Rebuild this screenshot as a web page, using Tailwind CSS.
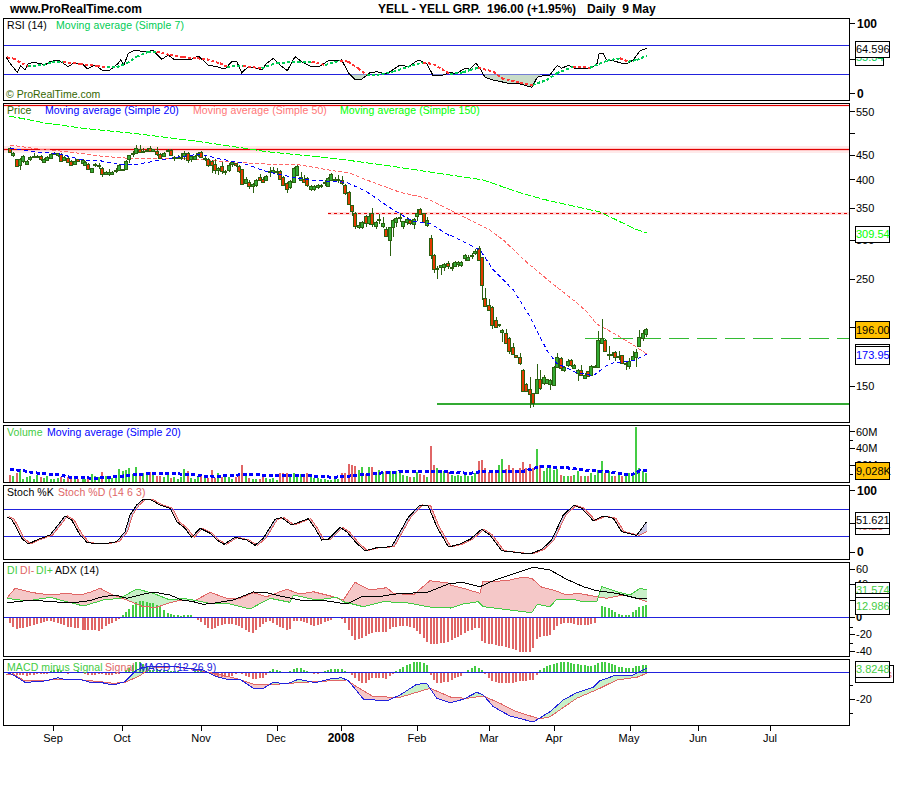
<!DOCTYPE html>
<html lang="en">
<head>
<meta charset="utf-8">
<title>YELL - ProRealTime</title>
<script src="https://cdn.jsdelivr.net/npm/@tailwindcss/browser@4"></script>
</head>
<body class="bg-white">
<div class="w-[900px] h-[800px] overflow-hidden bg-white text-black font-['Liberation_Sans',Arial,sans-serif] text-[11px] leading-[14px]">
  <!-- header -->
  <div class="h-[18px] flex items-center font-bold text-[12px] leading-[16px] whitespace-pre">
    <span class="ml-[10px] w-[368px]">www.ProRealTime.com</span>
    <span class="w-[109px]">YELL - YELL GRP.</span>
    <span class="w-[100px]">196.00 (+1.95%)</span>
    <span>Daily  9 May</span>
  </div>
  <div class="pl-[3px] flex flex-col gap-[2px]">
    <!-- RSI -->
    <div class="flex h-[83px]">
      <div class="relative w-[847px] border border-black">
        <svg id="p1" class="block" width="845" height="81" viewBox="4 19 845 81"></svg>
        <div class="absolute left-[3px] top-[-1px] flex text-[10.5px] tracking-[0.1px] whitespace-pre"><span class="w-[49px]">RSI (14)</span><span class="text-[#00cc55]">Moving average (Simple 7)</span></div>
        <div class="absolute left-[2px] top-[68px] text-[10.5px] text-[#336600]">© ProRealTime.com</div>
      </div>
      <div class="relative w-[50px]">
        <div class="absolute left-0 top-[5px] w-[5px] h-px bg-black"></div>
        <div class="absolute left-0 top-[41px] w-[5px] h-px bg-black"></div>
        <div class="absolute left-0 top-[75px] w-[5px] h-px bg-black"></div>
        <div class="absolute left-[7px] top-[-1px] font-bold text-[12px]">100</div>
        <div class="absolute left-[7px] top-[69px] font-bold text-[12px]">0</div>
        <div class="absolute left-[5px] top-[30px] w-[29px] h-[18px] border border-black bg-white text-[#00cc55] leading-[16px]">55.34</div>
        <div class="absolute left-[5px] top-[23px] w-[35px] h-[17px] border border-black bg-white leading-[15px]">64.596</div>
      </div>
    </div>
    <!-- Price -->
    <div class="flex h-[320px]">
      <div class="relative w-[847px] border border-black">
        <svg id="p2" class="block" width="845" height="318" viewBox="4 104 845 318"></svg>
        <div class="absolute left-[3px] top-[-1px] flex text-[10.5px] tracking-[0.1px] whitespace-pre"><span class="w-[38px] text-[#336600]">Price</span><span class="w-[148px] text-[#0000ff]">Moving average (Simple 20)</span><span class="w-[147px] text-[#ff7777]">Moving average (Simple 50)</span><span class="text-[#00ff00]">Moving average (Simple 150)</span></div>
      </div>
      <div class="relative w-[50px]">
        <div class="absolute left-0 top-[8px] w-[5px] h-px bg-black"></div>
        <div class="absolute left-0 top-[30px] w-[5px] h-px bg-black"></div>
        <div class="absolute left-0 top-[52px] w-[5px] h-px bg-black"></div>
        <div class="absolute left-0 top-[76px] w-[5px] h-px bg-black"></div>
        <div class="absolute left-0 top-[105px] w-[5px] h-px bg-black"></div>
        <div class="absolute left-0 top-[137px] w-[5px] h-px bg-black"></div>
        <div class="absolute left-0 top-[176px] w-[5px] h-px bg-black"></div>
        <div class="absolute left-0 top-[224px] w-[5px] h-px bg-black"></div>
        <div class="absolute left-0 top-[283px] w-[5px] h-px bg-black"></div>
        <div class="absolute left-[6px] top-[2px]">550</div>
        <div class="absolute left-[6px] top-[45px]">450</div>
        <div class="absolute left-[6px] top-[70px]">400</div>
        <div class="absolute left-[6px] top-[98px]">350</div>
        <div class="absolute left-[6px] top-[130px]">300</div>
        <div class="absolute left-[6px] top-[169px]">250</div>
        <div class="absolute left-[6px] top-[276px]">150</div>
        <div class="absolute left-[5px] top-[123px] w-[35px] h-[17px] border border-black bg-white text-[#00ff00] leading-[15px]">309.54</div>
        <div class="absolute left-[5px] top-[218px] w-[35px] h-[18px] border border-black bg-[#ffc000] leading-[16px]">196.00</div>
        <div class="absolute left-[5px] top-[241px] w-[35px] h-[17px] border border-black bg-white"></div>
        <div class="absolute left-[5px] top-[243px] w-[35px] h-[19px] border border-black bg-white text-[#0000ff] leading-[17px]">173.95</div>
      </div>
    </div>
    <!-- Volume -->
    <div class="flex h-[58px]">
      <div class="relative w-[847px] border border-black">
        <svg id="p3" class="block" width="845" height="56" viewBox="4 426 845 56"></svg>
        <div class="absolute left-[3px] top-[-1px] flex text-[10.5px] tracking-[0.1px] whitespace-pre"><span class="w-[40px] text-[#44cc44]">Volume</span><span class="text-[#0000ff]">Moving average (Simple 20)</span></div>
      </div>
      <div class="relative w-[50px]">
        <div class="absolute left-0 top-[6px] w-[5px] h-px bg-black"></div>
        <div class="absolute left-0 top-[15px] w-[3px] h-px bg-black"></div>
        <div class="absolute left-0 top-[23px] w-[5px] h-px bg-black"></div>
        <div class="absolute left-0 top-[40px] w-[5px] h-px bg-black"></div>
        <div class="absolute left-0 top-[49px] w-[3px] h-px bg-black"></div>
        <div class="absolute left-[6px] top-0">60M</div>
        <div class="absolute left-[6px] top-[16px]">40M</div>
        <div class="absolute left-[6px] top-[33px]">20M</div>
        <div class="absolute left-[5px] top-[37px] w-[35px] h-[18px] border border-black bg-[#ffc000] leading-[16px]">9,028K</div>
      </div>
    </div>
    <!-- Stoch -->
    <div class="flex h-[75px]">
      <div class="relative w-[847px] border border-black">
        <svg id="p4" class="block" width="845" height="73" viewBox="4 486 845 73"></svg>
        <div class="absolute left-[3px] top-[-1px] flex text-[10.5px] tracking-[0.1px] whitespace-pre"><span class="w-[51px]">Stoch %K</span><span class="text-[#e06666]">Stoch %D (14 6 3)</span></div>
      </div>
      <div class="relative w-[50px]">
        <div class="absolute left-0 top-[5px] w-[5px] h-px bg-black"></div>
        <div class="absolute left-0 top-[38px] w-[5px] h-px bg-black"></div>
        <div class="absolute left-0 top-[67px] w-[5px] h-px bg-black"></div>
        <div class="absolute left-[7px] top-[-1px] font-bold text-[12px]">100</div>
        <div class="absolute left-[7px] top-[60px] font-bold text-[12px]">0</div>
        <div class="absolute left-[5px] top-[33px] w-[35px] h-[17px] border border-black bg-white text-[#e06666] leading-[15px]">49.23</div>
        <div class="absolute left-[5px] top-[27px] w-[35px] h-[17px] border border-black bg-white leading-[15px]">51.621</div>
      </div>
    </div>
    <!-- ADX -->
    <div class="flex h-[95px]">
      <div class="relative w-[847px] border border-black">
        <svg id="p5" class="block" width="845" height="93" viewBox="4 563 845 93"></svg>
        <div class="absolute left-[3px] top-0 flex text-[10.5px] tracking-[0.1px] whitespace-pre"><span class="w-[13px] text-[#44cc44]">DI</span><span class="w-[16px] text-[#e06666]">DI-</span><span class="w-[19px] text-[#44cc44]">DI+</span><span>ADX (14)</span></div>
      </div>
      <div class="relative w-[50px]">
        <div class="absolute left-0 top-[7px] w-[5px] h-px bg-black"></div>
        <div class="absolute left-0 top-[22px] w-[5px] h-px bg-black"></div>
        <div class="absolute left-0 top-[38px] w-[5px] h-px bg-black"></div>
        <div class="absolute left-0 top-[55px] w-[5px] h-px bg-black"></div>
        <div class="absolute left-0 top-[65px] w-[3px] h-px bg-black"></div>
        <div class="absolute left-0 top-[72px] w-[5px] h-px bg-black"></div>
        <div class="absolute left-0 top-[81px] w-[3px] h-px bg-black"></div>
        <div class="absolute left-0 top-[89px] w-[5px] h-px bg-black"></div>
        <div class="absolute left-[6px] top-0">60</div>
        <div class="absolute left-[6px] top-[15px]">40</div>
        <div class="absolute left-[6px] top-[48px] font-bold">0</div>
        <div class="absolute left-[6px] top-[65px]">-20</div>
        <div class="absolute left-[6px] top-[82px]">-40</div>
        <div class="absolute left-[5px] top-[20px] w-[35px] h-[17px] border border-black bg-white text-[#44cc44] leading-[15px]">31.574</div>
        <div class="absolute left-[5px] top-[31px] w-[35px] h-[17px] border border-black bg-white"></div>
        <div class="absolute left-[5px] top-[35px] w-[35px] h-[18px] border border-black bg-white text-[#44cc44] leading-[16px]">12.986</div>
      </div>
    </div>
    <!-- MACD -->
    <div class="flex h-[67px]">
      <div class="relative w-[847px] border border-black">
        <svg id="p6" class="block" width="845" height="65" viewBox="4 660 845 65"></svg>
        <div class="absolute left-[3px] top-0 flex text-[10.5px] tracking-[0.1px] whitespace-pre"><span class="w-[98px] text-[#44cc44]">MACD minus Signal</span><span class="w-[34px] text-[#e06666]">Signal</span><span class="text-[#2222dd]">MACD (12 26 9)</span></div>
      </div>
      <div class="relative w-[50px]">
        <div class="absolute left-0 top-[26px] w-[3px] h-px bg-black"></div>
        <div class="absolute left-0 top-[40px] w-[5px] h-px bg-black"></div>
        <div class="absolute left-0 top-[54px] w-[3px] h-px bg-black"></div>
        <div class="absolute left-[6px] top-[33px]">-20</div>
        <div class="absolute left-[5px] top-[6px] w-[39px] h-[18px] border border-black bg-white text-[#e06666] text-right pr-[1px] leading-[16px]">s</div>
        <div class="absolute left-[5px] top-[2px] w-[35px] h-[17px] border border-black bg-white text-[#44cc44] leading-[15px]">3.8248</div>
      </div>
    </div>
  </div>
  <!-- date axis -->
  <div class="relative h-[24px] ml-[3px] w-[847px]">
    <div class="absolute left-[50px] top-0 w-px h-[5px] bg-black"></div>
    <div class="absolute left-[119px] top-0 w-px h-[5px] bg-black"></div>
    <div class="absolute left-[198px] top-0 w-px h-[5px] bg-black"></div>
    <div class="absolute left-[274px] top-0 w-px h-[5px] bg-black"></div>
    <div class="absolute left-[338px] top-0 w-px h-[5px] bg-black"></div>
    <div class="absolute left-[414px] top-0 w-px h-[5px] bg-black"></div>
    <div class="absolute left-[486px] top-0 w-px h-[5px] bg-black"></div>
    <div class="absolute left-[551px] top-0 w-px h-[5px] bg-black"></div>
    <div class="absolute left-[627px] top-0 w-px h-[5px] bg-black"></div>
    <div class="absolute left-[695px] top-0 w-px h-[5px] bg-black"></div>
    <div class="absolute left-[767px] top-0 w-px h-[5px] bg-black"></div>
    <div class="absolute left-[50px] top-[5px] -translate-x-1/2">Sep</div>
    <div class="absolute left-[119px] top-[5px] -translate-x-1/2">Oct</div>
    <div class="absolute left-[198px] top-[5px] -translate-x-1/2">Nov</div>
    <div class="absolute left-[273px] top-[5px] -translate-x-1/2">Dec</div>
    <div class="absolute left-[338px] top-[5px] -translate-x-1/2 font-bold text-[12px]">2008</div>
    <div class="absolute left-[414px] top-[5px] -translate-x-1/2">Feb</div>
    <div class="absolute left-[486px] top-[5px] -translate-x-1/2">Mar</div>
    <div class="absolute left-[551px] top-[5px] -translate-x-1/2">Apr</div>
    <div class="absolute left-[626px] top-[5px] -translate-x-1/2">May</div>
    <div class="absolute left-[695px] top-[5px] -translate-x-1/2">Jun</div>
    <div class="absolute left-[767px] top-[5px] -translate-x-1/2">Jul</div>
  </div>
</div>
<script>
const Z=(f,dx,dy)=>{const o=[];for(let i=0;i<f.length;i+=2)o.push([dx+f[i]/3,dy+f[i+1]/3]);return o};
const J=(...a)=>[].concat(...a);
const at=(p,x)=>{if(x<=p[0][0])return p[0][1];for(let i=1;i<p.length;i++)if(x<=p[i][0]){const a=p[i-1],b=p[i];return a[1]+(b[1]-a[1])*(x-a[0])/((b[0]-a[0])||1)}return p[p.length-1][1]};
const S=s=>s.map(p=>p[0].toFixed(1)+','+p[1].toFixed(1)).join(' ');
const line=(p,c,w=1,d='')=>`<polyline points="${S(p)}" fill="none" stroke="${c}" stroke-width="${w}" ${d?`stroke-dasharray="${d}"`:''} shape-rendering="crispEdges"/>`;
const hl=(y,x1,x2,c,w=1,d='')=>`<line x1="${x1}" x2="${x2}" y1="${y}" y2="${y}" stroke="${c}" stroke-width="${w}" ${d?`stroke-dasharray="${d}"`:''} shape-rendering="crispEdges"/>`;
const fillB=(a,b,x1,x2,cA,cB)=>{let pa='',pb='';for(let x=Math.ceil(x1);x<x2;x++){const m=x+.5,ya=at(a,m),yb=at(b,m);if(Math.abs(ya-yb)<.3)continue;const seg=`M${m} ${ya.toFixed(1)}V${yb.toFixed(1)}`;if(ya<yb)pa+=seg;else pb+=seg}return `<path d="${pa}" stroke="${cA}" fill="none"/><path d="${pb}" stroke="${cB}" fill="none"/>`};
const R=(x,y,w,h,c,s='')=>`<rect x="${x}" y="${y}" width="${w}" height="${h}" fill="${c}" ${s?`stroke="${s}"`:''} shape-rendering="crispEdges"/>`;

/* candles: zoomx, bodyTop, bodyBottom, wickTop, wickBottom, red */
const c3=[[31,55,67,52,70,1],[40,70,76,66,82,0],[52,88,110,88,112,1],[60,88,105,85,120,0],[70,78,94,76,98,0],[82,93,101,90,103,0],[91,82,88,78,93,0],[103,78,82,70,84,0],[112,78,82,75,84,0],[124,78,88,74,92,1],[133,88,96,85,98,0],[142,82,90,78,92,0],[154,72,84,70,86,0],[163,70,74,65,76,0],[175,70,76,68,82,0],[184,72,92,70,94,1],[192,82,92,78,94,0],[205,85,97,80,99,1],[214,94,105,90,108,1],[226,92,101,88,103,0],[235,88,94,86,97,1],[248,90,100,88,103,0],[256,96,105,92,108,0],[265,103,118,100,120,1],[277,115,126,113,128,0],[286,103,106,98,112,0],[298,104,107,98,116,0],[307,114,131,112,140,1],[319,126,132,122,136,0],[328,126,132,117,138,0],[337,126,132,124,136,0],[349,119,121,115,130,0],[358,105,120,102,122,0],[368,117,120,116,122,0],[379,93,118,90,120,0],[388,76,88,74,98,0],[400,70,74,64,80,0],[409,55,70,45,72,0],[421,58,66,45,68,1],[430,62,66,55,68,0],[442,59,62,55,66,0],[451,55,64,48,66,1],[460,58,64,56,66,0],[472,64,74,52,78,1],[481,72,84,70,86,1],[493,68,76,66,80,0],[503,61,64,58,66,0],[514,60,76,58,78,1],[523,81,84,78,92,0],[535,81,84,76,88,0],[544,80,84,70,90,0],[553,70,78,62,90,0],[565,68,88,66,100,1],[574,78,88,74,96,0],[586,78,86,76,88,0],[595,68,74,66,80,0],[604,65,80,62,84,1],[616,83,86,78,92,0],[625,88,106,84,110,1],[637,94,106,90,130,1],[646,102,120,88,132,1],[655,115,120,110,134,0],[667,108,124,96,132,1],[676,124,127,120,134,0],[688,104,120,100,126,0],[697,97,103,92,112,0],[709,100,106,98,110,1],[718,108,124,104,128,1],[727,118,162,116,164,1],[739,146,158,140,162,0],[748,156,168,150,176,1],[760,162,168,158,190,0],[769,150,166,148,170,0],[781,140,148,132,152,1],[790,148,156,140,160,1],[799,138,150,136,152,0],[811,122,126,112,140,0],[820,120,126,110,130,0],[832,123,126,115,135,0],[841,124,148,120,150,1],[850,140,164,138,168,1],[862,160,178,156,188,1],[871,152,170,150,176,0],[883,115,158,112,160,0],[892,107,134,104,136,0],[904,140,148,126,152,0],[913,146,154,136,158,1],[922,145,166,142,170,1],[934,168,176,165,182,0],[943,168,176,166,184,0],[955,165,172,162,176,0],[964,165,168,162,174,0],[976,155,158,150,168,0],[985,145,170,142,172,0],[994,132,150,130,152,0],[1006,148,151,140,156,0],[1015,148,151,136,158,0],[1027,150,160,138,164,1],[1036,165,190,163,194,1],[1048,185,222,183,226,1],[1057,226,245,224,258,1],[1066,248,286,246,298,1],[1078,286,292,276,296,0],[1087,276,290,272,298,0],[1099,258,280,256,290,1],[1108,258,280,250,286,0],[1117,250,284,235,290,1],[1129,276,288,272,296,0],[1138,267,270,252,282,0],[1150,280,288,262,294,0],[1159,296,318,292,322,1],[1171,292,332,290,378,0],[1180,270,292,268,320,0],[1189,265,278,262,292,0],[1201,261,264,250,276,0],[1210,274,290,272,296,0],[1222,268,278,262,286,0],[1231,270,280,266,284,1],[1243,266,280,264,296,0],[1252,248,258,238,272,0],[1261,238,252,234,256,1],[1273,250,276,248,280,1],[1282,270,286,262,290,0],[1294,324,374,315,388,1],[1303,374,416,372,430,1],[1312,415,418,408,446,0],[1324,406,412,404,434,0],[1333,402,412,398,422,0],[1345,400,410,392,416,1]];
const c4=[[5,111,114,100,122,0],[16,95,108,92,112,0],[25,97,103,94,110,0],[34,95,104,92,112,0],[46,76,86,72,92,0],[55,80,90,76,94,0],[67,76,80,70,88,0],[76,62,68,58,76,0],[88,55,92,48,94,1],[97,82,166,80,210,1],[106,205,230,175,232,1],[118,224,238,208,240,1],[127,230,284,228,296,1],[139,270,290,262,294,1],[148,283,286,282,292,0],[157,300,306,296,335,0],[169,308,338,296,340,1],[178,324,364,322,372,1],[190,352,372,338,374,1],[199,376,382,375,384,1],[211,382,400,368,404,1],[220,420,482,418,484,1],[229,462,484,460,486,1],[241,478,494,440,535,1],[250,490,520,488,530,1],[262,448,490,402,492,0],[271,448,474,420,480,1],[283,442,460,436,466,0],[292,448,460,446,462,0],[301,450,462,448,480,0],[313,410,464,408,466,0],[322,380,410,368,412,0],[334,384,415,380,422,1],[343,410,420,408,426,0],[355,392,404,388,410,0],[364,390,406,388,412,1],[373,405,414,402,416,0],[385,420,430,418,452,0],[394,420,434,405,438,1],[406,434,444,428,448,0],[415,424,438,422,442,1],[424,408,434,406,436,0],[436,407,410,404,412,0],[445,330,410,302,412,0],[457,325,340,267,342,0],[466,330,364,328,366,1],[478,371,374,348,390,0],[487,371,374,366,378,0],[496,366,380,364,392,1],[508,377,380,364,390,0],[517,376,400,374,402,1],[529,399,402,396,420,0],[538,394,408,384,418,0],[550,378,390,362,392,0],[559,366,382,358,412,0],[568,322,350,300,352,0],[580,310,326,300,334,0],[589,296,312,294,320,0]];
const bars=J(c3.map(b=>({x:b[0]/3,t:130+b[1]/3,b:130+b[2]/3,wt:130+b[3]/3,wb:130+b[4]/3,r:b[5]})),c4.map(b=>({x:450+b[0]/3,t:230+b[1]/3,b:230+b[2]/3,wt:230+b[3]/3,wb:230+b[4]/3,r:b[5]})));

/* RSI */
const rsi=J(Z([18,170,30,190,42,205,52,218,62,198,75,210,85,190,100,188,120,190,135,195,150,185,175,180,190,190,205,200,220,190,245,190,262,207,285,195,305,210,330,210,355,190,362,180,372,195,385,160,405,150,430,155,460,152,485,178,505,165,525,180,550,178,575,178,595,168,625,195,650,200,675,207,695,185,710,185,725,218,745,200,770,205,785,210,800,190,820,175,840,195,862,212,885,170,905,185,935,200,960,198,985,182,1025,180,1045,218,1065,238,1085,238,1110,218,1130,215,1160,222,1200,195,1225,200,1255,180,1280,190,1300,228,1330,225,1350,218],0,0),Z([20,220,45,205,60,208,78,190,90,205,105,232,130,240,175,250,210,252,245,262,262,232,285,225,300,225,322,196,335,205,355,196,375,205,415,205,440,195,447,162,460,160,470,180,490,182,515,190,530,192,550,180,570,152,590,145],450,0));
const rsiM=J(Z([20,172,40,175,65,190,85,198,130,195,155,187,190,186,240,192,290,198,320,202,350,202,380,190,410,170,445,155,470,155,510,165,550,172,590,175,620,178,660,190,680,200,730,198,785,205,830,188,895,187,935,185,975,195,1020,182,1045,185,1075,205,1100,225,1130,225,1180,215,1250,192,1270,188,1300,192,1350,222],0,0),Z([40,217,60,210,85,203,130,215,155,235,210,248,248,255,290,240,320,220,370,200,420,203,470,182,510,175,535,185,560,180,590,167],450,0));
let h=hl(45.5,4,849,'#2222dd')+hl(74.5,4,849,'#2222dd');
{let p='';for(let x=340;x<540;x++){const y=at(rsi,x+.5);if(y>74.5)p+=`M${x+.5} 74.5V${y.toFixed(1)}`}h+=`<path d="${p}" stroke="#c8dcc8" fill="none"/>`}
h+=line(rsi,'#000');
for(let i=1;i<rsiM.length;i++){h+=line([rsiM[i-1],rsiM[i]],rsiM[i][1]>rsiM[i-1][1]+.2?'#ff3333':'#00cc55',2,'3 2')}
document.getElementById('p1').innerHTML=h;

/* Price */
const ma150=J(Z([28,348,130,368,250,385,400,400,600,425,735,445,800,455,1000,475,1150,495,1350,525],0,0),Z([100,540,200,575,280,598],450,0),[[600,212],[635,229],[647,233]]);
const ma50=J(Z([30,45,100,55,200,65,300,78,400,86,520,86,600,88,700,97,800,102,900,105,1000,122,1050,130,1100,150,1200,187,1280,205,1350,240],0,130),Z([120,0,160,30,230,97,300,155,370,210,410,245,440,282,500,315,550,345,590,372],450,230));
const ma20=J(Z([30,55,100,65,170,70,250,90,300,92,350,102,400,105,470,92,520,83,600,72,650,85,730,100,800,125,880,142,930,150,1040,157,1100,185,1180,240,1240,275,1290,280,1350,318],0,130),Z([0,15,70,50,90,60,130,120,190,180,240,260,290,360,320,400,380,428,430,437,480,400,550,392,590,372],450,230));
h='';
h+=R(4,104,845,3,'#ffe4e4')+R(4,146,845,7,'#ffeaea')+R(4,148,845,3,'#ffc8c8')+R(328,212,521,3,'#ffdcdc');
h+=hl(105.5,4,849,'#e00000')+hl(149.5,4,849,'#e00000')+hl(213.5,328,849,'#e00000',1,'3 3');
h+=line(ma150,'#00ff00',1,'7 2')+line(ma50,'#ff6666',1,'4 2');
h+=hl(338.5,585,849,'#33bb33',1,'20 8')+R(437,403,412,2,'#33aa33');
for(const b of bars){const x=Math.round(b.x);h+=R(x,b.wt,1,b.wb-b.wt,'#2a6010');h+=`<rect x="${x-1.5}" y="${Math.round(b.t)+.5}" width="3" height="${Math.max(1,Math.round(b.b-b.t))}" fill="${b.r?'#e23a00':'#33aa33'}" stroke="#2a6010" shape-rendering="crispEdges"/>`}
h+=line(ma20,'#0000ff',1,'4 3');
document.getElementById('p2').innerHTML=h;

/* Volume */
const v3=[7,6,9,13,3,5,6,3,7,5,4,6,3,3,4,5,3,5,4,3,3,4,3,4,8,6,5,10,6,5,4,5,13,11,12,14,8,15,7,9,9,10,8,6,6,5,8,4,5,3,5,13,11,4,3,6,7,4,4,12,4,9,5,6,5,3,5,9,17,7,4,3,3,3,5,4,3,4,2,9,9,9,6,9,5,8,7,9,5,4,4,3,3,2,2,3,3,9,9,18,17,16,12,15,8,15,15,10,12,10,11,11,9,11,11,7,6,5,5,10,8,7,5,36,17,14,12,11,10];
const v4=[737,740,737,740,735,738,740,730,695,692,715,727,727,727,705,687,718,705,715,725,715,698,715,702,715,657,707,725,715,707,722,718,735,740,740,740,735,725,738,740,738,730,735,720,695,730,725,740,740,730,740,730,730,730,593,715,725,730].map(t=>(757-t)/3);
const vols=J(v3,v4);
h='';
bars.forEach((b,i)=>{const v=vols[i]||5;h+=R(Math.round(b.x)-1,482-v,2,v,b.r?'#e06666':'#44cc44')});
const vm=J(Z([30,148,70,152,100,158,180,165,210,172,290,175,350,170,430,162,500,160,580,164,630,170,750,163,800,166,940,168,1000,172,1050,168,1130,160,1200,155,1350,155],0,420),Z([0,727,60,730,100,724,220,724,270,710,340,712,400,720,470,725,530,733,550,732,570,722,590,723],450,230));
h+=line(vm,'#0000ff',3,'4 2.5');
document.getElementById('p3').innerHTML=h;

/* Stoch */
const k=J(Z([20,290,35,298,50,325,65,355,85,372,110,360,150,345,170,320,195,288,215,300,240,345,262,368,310,372,350,365,375,335,390,285,410,255,430,238,450,238,480,255,510,265,530,305,555,325,575,352,600,325,630,340,650,360,672,373,705,352,740,360,765,376,790,355,825,298,845,293,875,315,925,296,945,325,965,360,985,358,1020,322,1040,335,1070,370,1095,392,1130,383,1175,380,1225,292,1260,255,1285,258,1310,320,1345,380],0,420),Z([0,200,30,192,60,178,95,148,120,165,155,212,240,222,275,208,305,180,340,105,372,76,395,85,430,122,460,108,490,115,515,155,560,166,590,125],450,480));
const d=k.map(p=>[p[0]+2.5,p[1]]);d[d.length-1]=[647,d[d.length-1][1]+10];
h=fillB(k,d,7,647,'#c8c8e4','#f5c8c8');
h+=hl(509.5,4,849,'#2222dd')+hl(536.5,4,849,'#2222dd');
h+=line(d,'#e06666')+line(k,'#000');
document.getElementById('p4').innerHTML=h;

/* ADX */
const adx=J(Z([20,548,50,545,100,540,150,545,220,548,270,542,300,532,345,525,380,535,420,525,460,516,510,525,545,540,580,545,610,553,640,550,700,540,760,516,800,518,850,530,900,540,975,542,1040,552,1090,528,1150,528,1200,520,1280,518,1350,490],0,420),Z([0,310,40,308,90,320,130,302,180,285,250,262,300,270,350,298,400,320,440,332,500,340,560,355,590,357],450,480));
const dm=J(Z([20,535,45,505,100,518,150,525,200,520,240,525,270,517,300,505,340,525,380,540,430,560,470,562,510,548,545,540,580,545,630,517,680,535,720,535,760,518,800,530,860,508,900,522,940,515,1000,530,1030,540,1065,487,1110,510,1160,503,1180,520,1240,525,1290,482,1350,490],0,420),Z([0,315,40,325,90,340,98,305,130,305,180,300,215,292,245,295,275,322,310,330,350,345,385,340,440,350,470,355,520,345,560,355,590,365],450,480));
const dp=J(Z([20,535,60,540,100,540,150,532,200,545,250,558,310,540,360,535,410,507,460,520,510,540,550,535,590,542,640,552,680,550,750,567,810,535,870,547,880,525,950,540,1010,532,1030,545,1090,560,1150,545,1220,548,1300,563,1350,562],0,420),Z([0,385,40,372,85,365,100,380,180,390,245,398,262,373,300,380,320,358,370,358,400,365,440,365,455,320,500,335,540,345,570,325,590,330],450,480));
h=fillB(dm,dp,7,647,'#f5c8c8','#c8f0c8');
bars.forEach(b=>{const g=at(dm,b.x)-at(dp,b.x);const x=Math.round(b.x)-1;if(Math.abs(g)<.5)return;h+=g>0?R(x,617-g,2,g,'#44cc44'):R(x,618,2,-g,'#e06666')});
h+=hl(617.5,4,849,'#2222dd');
h+=line(dm,'#e06666')+line(dp,'#44cc44')+line(adx,'#000');
document.getElementById('p5').innerHTML=h;

/* MACD */
const m=J(Z([18,97,40,105,75,127,110,125,140,122,175,113,200,120,240,118,270,127,300,127,340,135,375,125,410,90,430,82,470,78,520,78,560,85,610,90,650,110,690,120,720,118,760,145,790,145,820,127,860,132,895,118,945,128,990,117,1025,113,1045,122,1090,177,1160,183,1200,165,1250,133,1280,130,1310,175,1350,188],0,640),Z([40,178,80,157,100,165,130,200,180,228,250,246,300,215,340,180,380,158,430,142,450,122,490,108,545,107,590,85],450,640));
const sg=J(Z([18,102,40,102,70,120,110,122,150,120,200,118,250,120,300,125,340,130,375,127,420,107,450,85,520,80,580,88,640,100,700,113,760,132,800,135,870,130,940,125,1040,120,1070,140,1120,170,1200,172,1290,145,1350,170],0,640),Z([0,172,50,175,100,168,150,190,200,215,270,237,300,230,380,175,450,145,500,120,560,112,590,100],450,640));
h=fillB(m,sg,7,647,'#c8f0c8','#f5c8c8');
bars.forEach(b=>{const g=(at(sg,b.x)-at(m,b.x))*1.4;const x=Math.round(b.x)-1;const a=Math.min(Math.abs(g),10);if(a<.5)return;h+=g>0?R(x,672-a,2,a,'#44cc44'):R(x,673,2,a,'#e06666')});
h+=hl(672.5,4,849,'#2222dd');
h+=line(sg,'#e06666')+line(m,'#2222dd');
document.getElementById('p6').innerHTML=h;
</script>
</body>
</html>
